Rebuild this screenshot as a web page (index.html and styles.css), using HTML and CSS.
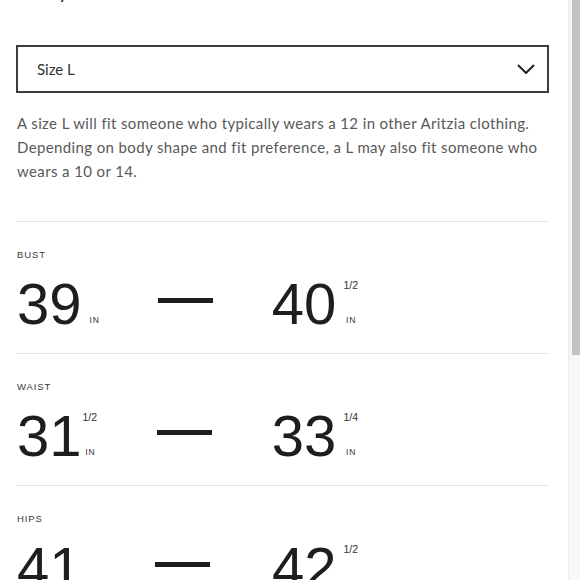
FILE: index.html
```html
<!DOCTYPE html>
<html lang="en">
<head>
<meta charset="utf-8">
<title>Size guide</title>
<link rel="stylesheet" href="styles.css">
</head>
<body>
<div class="page">
  <main class="content">
    <h2 class="title">Body Measurements</h2>
    <div class="select">
      <span class="select-text">Size L</span>
      <svg class="chevron" width="18" height="10" viewBox="0 0 18 10"><polyline points="1,1 9,9 17,1" fill="none" stroke="#222" stroke-width="2"/></svg>
    </div>
    <p class="desc">A size L will fit someone who typically wears a 12 in other Aritzia clothing.<br>Depending on body shape and fit preference, a L may also fit someone who<br>wears a 10 or 14.</p>

    <section class="measure">
      <div class="label">BUST</div>
      <div class="range">
        <div class="value"><span class="num">39</span><span class="side"><span class="frac"></span><span class="unit">IN</span></span></div>
        <span class="dash"></span>
        <div class="value"><span class="num">40</span><span class="side"><span class="frac">1/2</span><span class="unit">IN</span></span></div>
      </div>
    </section>

    <section class="measure">
      <div class="label">WAIST</div>
      <div class="range">
        <div class="value"><span class="num">3<span class="tight">1</span></span><span class="side"><span class="frac">1/2</span><span class="unit">IN</span></span></div>
        <span class="dash"></span>
        <div class="value"><span class="num">33</span><span class="side"><span class="frac">1/4</span><span class="unit">IN</span></span></div>
      </div>
    </section>

    <section class="measure">
      <div class="label">HIPS</div>
      <div class="range">
        <div class="value"><span class="num">4<span class="tight">1</span></span><span class="side"><span class="frac"></span><span class="unit">IN</span></span></div>
        <span class="dash"></span>
        <div class="value"><span class="num">42</span><span class="side"><span class="frac">1/2</span><span class="unit">IN</span></span></div>
      </div>
    </section>
  </main>
  <div class="scrollbar"><div class="thumb"></div></div>
</div>
</body>
</html>
```

FILE: styles.css
```css
html, body {
  margin: 0;
  padding: 0;
  background: #fff;
}
body {
  height: 580px;
  overflow: hidden;
  font-family: "Lato", "Liberation Sans", sans-serif;
}
.page {
  display: flex;
  height: 580px;
}
.content {
  flex: 1;
  min-width: 0;
  padding: 0 19px 0 16px;
  overflow: hidden;
}
.title {
  margin: -21px 0 0 7px;
  font-size: 20px;
  line-height: 24px;
  font-weight: 400;
  color: #222;
  white-space: nowrap;
}
.select {
  margin-top: 42px;
  height: 48px;
  box-sizing: border-box;
  border: 2px solid #3c3c3c;
  display: flex;
  align-items: center;
  justify-content: space-between;
  padding: 0 12px 0 19px;
}
.select-text {
  font-size: 15px;
  color: #333;
}
.chevron {
  display: block;
}
.desc {
  margin: 18px 0 0 1px;
  font-size: 15px;
  letter-spacing: 0.38px;
  line-height: 24px;
  color: #595959;
  white-space: nowrap;
}
.measure {
  margin-top: 38px;
  border-top: 1px solid #e4e4e4;
  padding: 27px 0 21px 0;
}
.measure + .measure {
  margin-top: 0;
}
.label {
  font-family: "Liberation Sans", Arial, sans-serif;
  font-size: 9.5px;
  line-height: 12px;
  letter-spacing: 0.9px;
  color: #3a3a3a;
  padding-left: 1px;
}
.range {
  margin-top: 14px;
  width: 342px;
  display: flex;
  justify-content: space-between;
  align-items: stretch;
}
.value {
  display: flex;
  gap: 7px;
}
.num {
  font-family: "Liberation Sans", Arial, sans-serif;
  font-size: 58px;
  line-height: 57px;
  color: #1e1e1e;
  margin-left: 1px;
}
.tight {
  letter-spacing: -6px;
}
.side {
  display: flex;
  flex-direction: column;
  justify-content: space-between;
  align-items: center;
  padding: 5px 0 8px 0;
  font-family: "Liberation Sans", Arial, sans-serif;
  color: #333;
}
.frac {
  font-size: 10.5px;
  line-height: 11px;
  min-height: 11px;
}
.unit {
  font-size: 8.5px;
  line-height: 8px;
  letter-spacing: 0.9px;
  padding-left: 1px;
}
.dash {
  align-self: flex-start;
  margin-top: 23px;
  width: 55px;
  height: 5px;
  background: #1e1e1e;
}
.scrollbar {
  width: 8px;
  flex: none;
  background: #f7f7f7;
  border-left: 1px solid #eaeaea;
  padding-left: 3px;
}
.thumb {
  width: 8px;
  height: 355px;
  background: #c2c2c2;
}
```
